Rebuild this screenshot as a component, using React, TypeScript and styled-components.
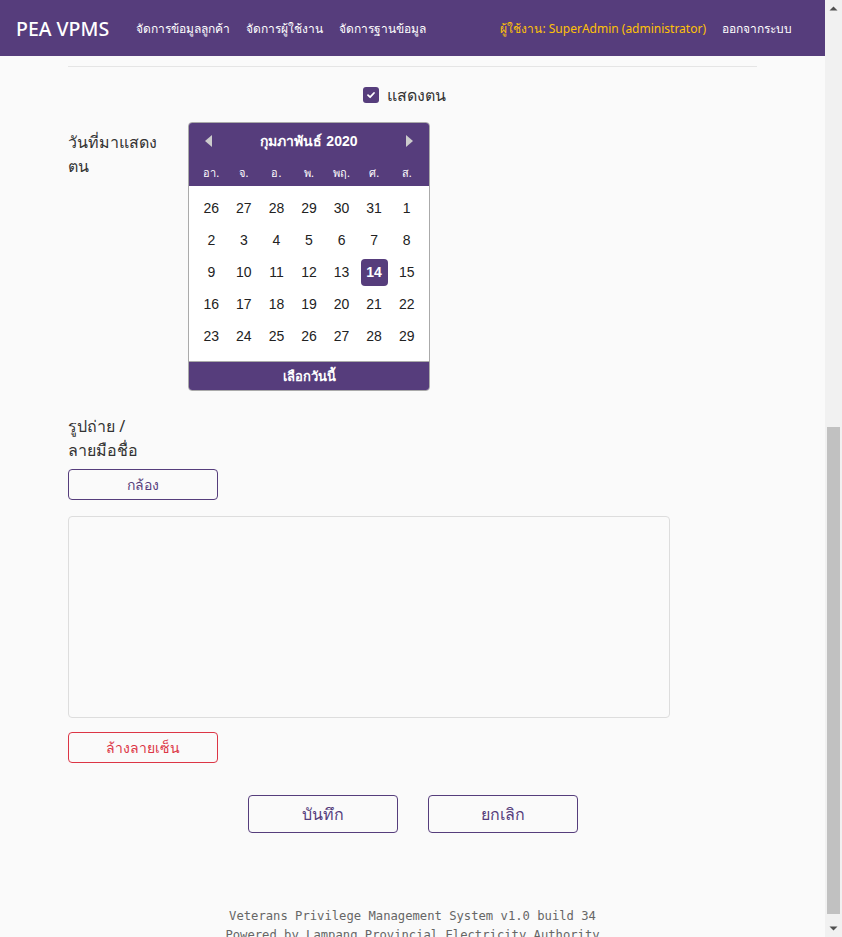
import React, { useLayoutEffect } from "react";
import styled, { createGlobalStyle } from "styled-components";

const PURPLE = "#563d7c";

const GlobalStyle = createGlobalStyle`
  html::-webkit-scrollbar { display: none; }
  body {
    margin: 0 17px 0 0;
    background: #fafafa;
    color: #333;
    font-family: "Noto Sans", "Liberation Sans", sans-serif;
  }
  * { box-sizing: border-box; }
`;

const Navbar = styled.nav`
  position: fixed;
  top: 0;
  left: 0;
  right: 17px;
  height: 56px;
  background: ${PURPLE};
  display: flex;
  align-items: center;
  justify-content: space-between;
  padding: 0 25px 0 16px;
  z-index: 10;
`;

const Brand = styled.span`
  color: #fff;
  font-size: 19.5px;
  font-weight: 500;
  margin-right: 19px;
`;

const NavGroup = styled.div`
  display: flex;
  align-items: center;
`;

const NavLink = styled.a<{ $accent?: boolean }>`
  color: ${(p) => (p.$accent ? "#ffc107" : "#fff")};
  font-size: 12px;
  padding: 0 8px;
  text-decoration: none;
`;

/* browser scrollbar drawn as a fixed overlay on the right edge */
const ScrollRail = styled.div`
  position: fixed;
  top: 0;
  right: 0;
  bottom: 0;
  width: 17px;
  background: #f1f1f1;
  z-index: 20;
`;

const ScrollThumb = styled.div`
  position: absolute;
  left: 2px;
  right: 2px;
  top: 427px;
  height: 487px;
  background: #c1c1c1;
`;

const ScrollArrow = styled.svg<{ $down?: boolean }>`
  position: absolute;
  left: 0;
  ${(p) => (p.$down ? "bottom: 0;" : "top: 0;")}
`;

const Main = styled.main`
  width: 689px;
  margin: 0 auto;
  padding-top: 56px;
`;

const Title = styled.h4`
  margin: 24px 0 16px;
  font-size: 22px;
  font-weight: 500;
  color: #333;
`;

const FieldRow = styled.div<{ $gap?: number }>`
  display: grid;
  grid-template-columns: 90px 1fr;
  column-gap: 30px;
  margin-bottom: ${(p) => p.$gap ?? 16}px;
`;

const Label = styled.label`
  display: block;
  font-size: 16px;
  line-height: 24px;
  padding-top: 8px;
  width: 90px;
  color: #333;
`;

const Input = styled.div`
  height: 38px;
  border: 1px solid #ced4da;
  border-radius: 4px;
  background: #fff;
`;

const Divider = styled.hr`
  border: 0;
  border-top: 1px solid #e5e5e5;
  margin: 16px 0 16px;
`;

const CheckRow = styled.div`
  display: flex;
  justify-content: center;
  align-items: center;
  gap: 8px;
  padding-right: 16px;
  height: 24px;
  margin-bottom: 15px;
  font-size: 16px;
`;

const CheckBox = styled.span`
  width: 16px;
  height: 16px;
  border-radius: 3px;
  background: ${PURPLE};
  display: inline-flex;
  align-items: center;
  justify-content: center;
`;

const Calendar = styled.div`
  width: 242px;
  border: 1px solid #aaa;
  border-radius: 4px;
  overflow: hidden;
  background: #fff;
  font-family: "Liberation Sans", Arial, sans-serif;
`;

const CalHead = styled.div`
  background: ${PURPLE};
  color: #fff;
`;

const MonthRow = styled.div`
  height: 36px;
  display: flex;
  align-items: center;
  justify-content: space-between;
  padding: 0 16px;
`;

const MonthTitle = styled.span`
  font-size: 14px;
  font-weight: bold;
`;

const Arrow = styled.span<{ $dir: "l" | "r" }>`
  width: 0;
  height: 0;
  border-top: 6px solid transparent;
  border-bottom: 6px solid transparent;
  ${(p) =>
    p.$dir === "l"
      ? `border-right: 7px solid #ccc;`
      : `border-left: 7px solid #ccc;`}
`;

const Grid7 = styled.div`
  display: grid;
  grid-template-columns: repeat(7, 1fr);
  padding: 0 6px;
`;

const WeekDay = styled.span`
  height: 27px;
  display: flex;
  align-items: center;
  justify-content: center;
  font-size: 11px;
  font-family: "Noto Sans", sans-serif;
`;

const DayBody = styled(Grid7)`
  padding: 6px 6px 9px;
`;

const DayCell = styled.span<{ $sel?: boolean }>`
  height: 32px;
  display: flex;
  align-items: center;
  justify-content: center;
  font-size: 14px;
  color: #222;
  & > span {
    width: 27px;
    height: 27px;
    display: flex;
    align-items: center;
    justify-content: center;
    border-radius: 4px;
    ${(p) => (p.$sel ? `background: ${PURPLE}; color: #fff; font-weight: bold;` : "")}
  }
`;

const CalFoot = styled.div`
  background: ${PURPLE};
  border-top: 1px solid #aaa;
  color: #fff;
  height: 29px;
  display: flex;
  align-items: center;
  justify-content: center;
  font-size: 13px;
  font-weight: bold;
  font-family: "Noto Sans", sans-serif;
`;

const Section = styled.div`
  margin-bottom: 16px;
`;

const PhotoLabel = styled(Label)`
  padding-bottom: 7px;
`;

const OutlineButton = styled.button<{ $danger?: boolean; $big?: boolean }>`
  display: block;
  width: 150px;
  height: ${(p) => (p.$big ? "38px" : "31px")};
  background: transparent;
  border: 1px solid ${(p) => (p.$danger ? "#dc3545" : PURPLE)};
  color: ${(p) => (p.$danger ? "#dc3545" : PURPLE)};
  border-radius: 4px;
  font-family: inherit;
  font-size: ${(p) => (p.$big ? "16px" : "14px")};
  padding: 0;
`;

const SignPad = styled.div`
  width: 602px;
  height: 202px;
  border: 1px solid #ddd;
  border-radius: 4px;
  background: #fafafa;
  margin: 16px 0 14px;
`;

const ActionRow = styled.div`
  display: flex;
  justify-content: center;
  gap: 30px;
  margin-top: 32px;
`;

const Footer = styled.footer`
  margin-top: 74px;
  height: 30px;
  overflow: hidden;
  text-align: center;
  font-family: "DejaVu Sans Mono", "Liberation Mono", monospace;
  font-size: 12.2px;
  line-height: 19px;
  color: #666;
`;

const fields = [
  "เลขประจำตัวประชาชน",
  "คำนำหน้า",
  "ชื่อ",
  "นามสกุล",
  "วันเกิด",
  "ที่อยู่",
  "ตำบล",
  "อำเภอ",
  "จังหวัด",
  "โทรศัพท์",
  "ประเภท",
  "หมายเลขผู้ใช้ไฟ",
];

const weekdays = ["อา.", "จ.", "อ.", "พ.", "พฤ.", "ศ.", "ส."];
const days = [
  26, 27, 28, 29, 30, 31, 1, 2, 3, 4, 5, 6, 7, 8, 9, 10, 11, 12, 13, 14, 15, 16,
  17, 18, 19, 20, 21, 22, 23, 24, 25, 26, 27, 28, 29,
];

export default function App() {
  useLayoutEffect(() => {
    const go = () => window.scrollTo(0, document.documentElement.scrollHeight);
    go();
    const t = setTimeout(go, 50);
    return () => clearTimeout(t);
  }, []);

  return (
    <>
      <GlobalStyle />
      <Navbar>
        <NavGroup>
          <Brand>PEA VPMS</Brand>
          <NavLink>จัดการข้อมูลลูกค้า</NavLink>
          <NavLink>จัดการผู้ใช้งาน</NavLink>
          <NavLink>จัดการฐานข้อมูล</NavLink>
        </NavGroup>
        <NavGroup>
          <NavLink $accent>ผู้ใช้งาน: SuperAdmin (administrator)</NavLink>
          <NavLink>ออกจากระบบ</NavLink>
        </NavGroup>
      </Navbar>
      <ScrollRail>
        <ScrollArrow width="17" height="17" viewBox="0 0 17 17">
          <path d="M4.5 10.5 L8.5 6.5 L12.5 10.5 Z" fill="#505050" />
        </ScrollArrow>
        <ScrollThumb />
        <ScrollArrow $down width="17" height="17" viewBox="0 0 17 17">
          <path d="M4.5 6.5 L8.5 10.5 L12.5 6.5 Z" fill="#505050" />
        </ScrollArrow>
      </ScrollRail>
      <Main>
        <Title>บันทึกข้อมูลการแสดงตน</Title>
        {fields.map((f) => (
          <FieldRow key={f}>
            <Label>{f}</Label>
            <Input />
          </FieldRow>
        ))}
        <Divider />
        <CheckRow>
          <CheckBox>
            <svg width="10" height="10" viewBox="0 0 10 10">
              <path
                d="M2 5.2 L4.1 7.2 L8 3"
                fill="none"
                stroke="#fff"
                strokeWidth="1.8"
                strokeLinecap="round"
                strokeLinejoin="round"
              />
            </svg>
          </CheckBox>
          แสดงตน
        </CheckRow>
        <FieldRow $gap={15}>
          <Label>วันที่มาแสดงตน</Label>
          <Calendar>
            <CalHead>
              <MonthRow>
                <Arrow $dir="l" />
                <MonthTitle>กุมภาพันธ์ 2020</MonthTitle>
                <Arrow $dir="r" />
              </MonthRow>
              <Grid7>
                {weekdays.map((w) => (
                  <WeekDay key={w}>{w}</WeekDay>
                ))}
              </Grid7>
            </CalHead>
            <DayBody>
              {days.map((d, i) => (
                <DayCell key={i} $sel={i === 19}>
                  <span>{d}</span>
                </DayCell>
              ))}
            </DayBody>
            <CalFoot>เลือกวันนี้</CalFoot>
          </Calendar>
        </FieldRow>
        <Section>
          <PhotoLabel as="div">รูปถ่าย / ลายมือชื่อ</PhotoLabel>
          <OutlineButton>กล้อง</OutlineButton>
          <SignPad />
          <OutlineButton $danger>ล้างลายเซ็น</OutlineButton>
          <ActionRow>
            <OutlineButton $big>บันทึก</OutlineButton>
            <OutlineButton $big>ยกเลิก</OutlineButton>
          </ActionRow>
        </Section>
        <Footer>
          Veterans Privilege Management System v1.0 build 34
          <br />
          Powered by Lampang Provincial Electricity Authority
        </Footer>
      </Main>
    </>
  );
}
